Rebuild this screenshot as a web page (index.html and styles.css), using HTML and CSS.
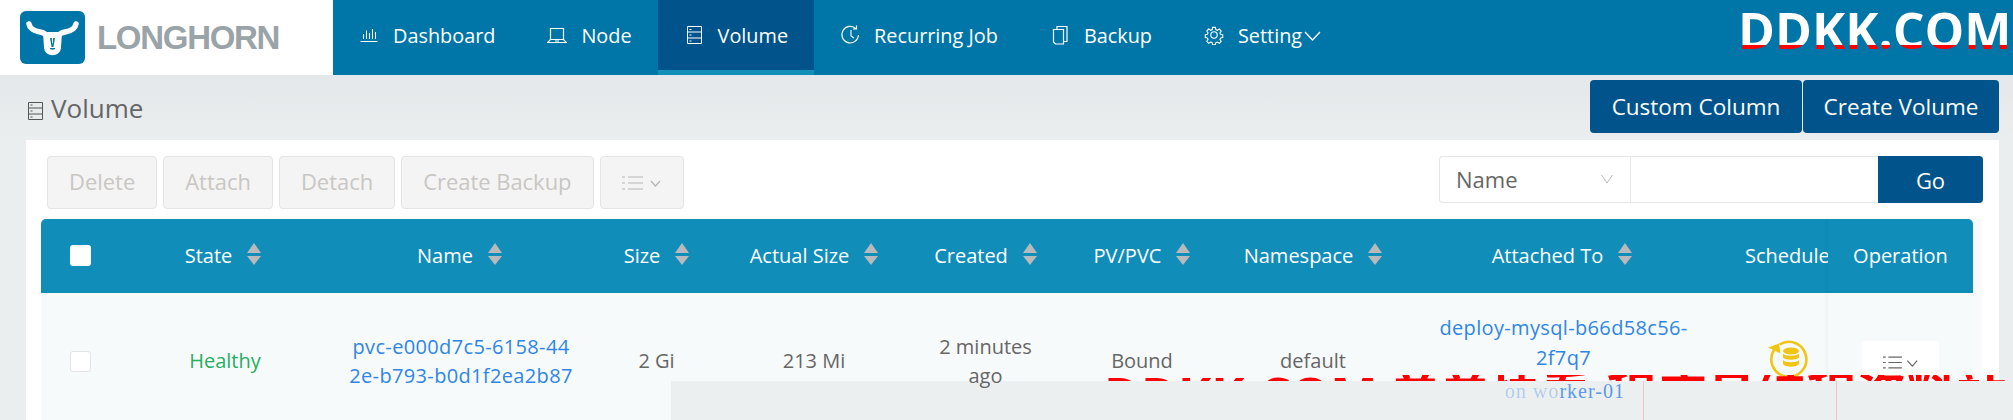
FILE: index.html
```html
<!DOCTYPE html>
<html lang="en">
<head>
<meta charset="utf-8">
<title>Longhorn Volume</title>
<link rel="stylesheet" href="styles.css">
</head>
<body>
<header class="topbar">
  <div class="brand">
    <svg class="logo" viewBox="0 0 65 53">
      <rect width="65" height="53" rx="6" fill="#0075a8"/>
      <path d="M9 13c1 5 5 7 11 8 4 .7 5.500 1.500 6 4l.8 12c.2 3 2.700 4.500 5.700 4.500s5.500-1.500 5.700-4.500l.8-12c.5-2.500 2-3.300 6-4 6-1 10-3 11-8" fill="none" stroke="#fff" stroke-width="5.500" stroke-linecap="round" stroke-linejoin="round"/>
      <path d="M27 21h11l-1.500 16h-8z" fill="#fff"/>
      <path d="M30 27h5l-1.600 9h-1.800z" fill="#0075a8"/>
      <path d="M31.800 27h1.400l-.4 5.500h-.6z" fill="#fff"/>
    </svg>
    <span class="wordmark">LONGHORN</span>
  </div>
  <nav class="nav">
    <a class="nav-item"><svg class="nav-ic" viewBox="0 0 20 20"><path d="M1.500 16.500h17M4.500 14V9M7.500 14V5.500M10.500 14V8M13.500 14V4M16.500 14V7" fill="none" stroke="currentColor"/></svg>Dashboard</a>
    <a class="nav-item"><svg class="nav-ic" viewBox="0 0 20 20"><path d="M3.500 3.500h13v11h-13zM.5 17.500h19l-3-3h-13zM8 16h4" fill="none" stroke="currentColor" stroke-width="1.200"/></svg>Node</a>
    <a class="nav-item active"><svg class="nav-ic" viewBox="0 0 20 20"><path d="M3.500 1.500h14v17h-14zM3.500 7h14M3.500 13h14M5.500 4.500h2M5.500 10h2M5.500 16h2" fill="none" stroke="currentColor"/></svg>Volume</a>
    <a class="nav-item"><svg class="nav-ic" viewBox="0 0 20 20"><path d="M16 3.700A8.300 8.300 0 1 0 18.500 10M11 5v6l3 2M16.500 .5v3.500h-3.500" fill="none" stroke="currentColor" stroke-width="1.100"/></svg>Recurring Job</a>
    <a class="nav-item"><svg class="nav-ic" viewBox="0 0 20 20"><path d="M3.500 4.500h10v14.500h-8l-2-2zM7 4.500V1.500h10v15h-3.500" fill="none" stroke="currentColor" stroke-width="1.200"/></svg>Backup</a>
    <a class="nav-item last"><svg class="nav-ic" viewBox="0 0 20 20"><circle cx="10" cy="10" r="3.200" fill="none" stroke="currentColor" stroke-width="1.100"/><path d="M8.500 1.500h3l.5 2.500 1.700.8 2.200-1.400 2.100 2.200-1.400 2.100.8 1.600 2.300.5v3l-2.300.5-.8 1.600 1.400 2.200-2.100 2.100-2.200-1.400-1.700.8-.5 2.400h-3l-.5-2.400-1.700-.8-2.200 1.400-2.100-2.200 1.400-2.100-.8-1.600-2.300-.5v-3l2.300-.5.800-1.600-1.400-2.200 2.100-2.100 2.200 1.400 1.700-.8z" transform="translate(1 1) scale(.9)" fill="none" stroke="currentColor" stroke-width="1.200"/></svg>Setting<svg class="nav-caret" viewBox="0 0 17 10"><path d="M1 1l7.500 8L16 1" fill="none" stroke="currentColor" stroke-width="1.300"/></svg></a>
  </nav>
  <div class="watermark">DDKK.COM</div>
</header>

<main class="content">
  <div class="page-head">
    <h1 class="page-title"><svg class="title-ic" viewBox="0 0 15 18"><path d="M.5.5h14v17H.5zM.5 6h14M.5 12h14M2.500 3h2M2.500 9h2M2.500 15h2" fill="none" stroke="#555"/></svg>Volume</h1>
    <div class="head-actions">
      <button class="btn-primary">Custom Column</button>
      <button class="btn-primary">Create Volume</button>
    </div>
  </div>

  <section class="panel">
    <div class="toolbar">
      <div class="bulk">
        <button class="btn-off">Delete</button>
        <button class="btn-off">Attach</button>
        <button class="btn-off">Detach</button>
        <button class="btn-off">Create Backup</button>
        <button class="btn-off btn-menu"><svg class="menu-ic muted" viewBox="0 0 40 16"><path d="M0 2h3M6 2h15M0 8h3M6 8h15M0 14h3M6 14h15M29 6l4.500 5L38 6" fill="none" stroke="currentColor" stroke-width="1.200"/></svg></button>
      </div>
      <div class="search">
        <div class="search-field">Name<svg class="field-caret" viewBox="0 0 12 10"><path d="M.5 1l5.500 8 5.500-8" fill="none" stroke="#bbb"/></svg></div>
        <div class="search-input"></div>
        <button class="btn-go">Go</button>
      </div>
    </div>

    <div class="table-wrap">
      <div class="table">
        <div class="row head">
          <div class="c c-check"><span class="box solid"></span></div>
          <div class="c c-state">State<i class="sort"></i></div>
          <div class="c c-name">Name<i class="sort"></i></div>
          <div class="c c-size">Size<i class="sort"></i></div>
          <div class="c c-actual">Actual Size<i class="sort"></i></div>
          <div class="c c-created">Created<i class="sort"></i></div>
          <div class="c c-pv">PV/PVC<i class="sort"></i></div>
          <div class="c c-ns">Namespace<i class="sort"></i></div>
          <div class="c c-att">Attached To<i class="sort"></i></div>
          <div class="c c-sch">Schedule</div>
          <div class="c c-op">Operation</div>
        </div>
        <div class="row body">
          <div class="c c-check"><span class="box"></span></div>
          <div class="c c-state healthy">Healthy</div>
          <div class="c c-name link">pvc-e000d7c5-6158-44<br>2e-b793-b0d1f2ea2b87</div>
          <div class="c c-size">2 Gi</div>
          <div class="c c-actual">213 Mi</div>
          <div class="c c-created"><span class="over-sheet">2 minutes<br>ago</span></div>
          <div class="c c-pv">Bound</div>
          <div class="c c-ns">default</div>
          <div class="c c-att link"><span class="att-lines">deploy-mysql-b66d58c56-<br>2f7q7</span></div>
          <div class="c c-sch">
            <svg class="sched" viewBox="0 0 42 39"><path d="M11.500 6.500A17.500 17.500 0 1 1 6 12" fill="none" stroke="#f0c514" stroke-width="2.600"/><path d="M0 9.500l11-4 1.500 10z" fill="#f0c514"/><ellipse cx="23" cy="13" rx="8" ry="3.500" fill="#f0c514"/><path d="M15 15.500c2 3 14 3 16 0v4c-2 3-14 3-16 0zM15 22c2 3 14 3 16 0v4c-2 3.500-14 3.500-16 0z" fill="#f0c514"/></svg>
          </div>
          <div class="c c-op"><span class="op-btn"><svg class="menu-ic" viewBox="0 0 40 16"><path d="M0 2h3M6 2h15M0 8h3M6 8h15M0 14h3M6 14h15M27 6l5.500 6L38 6" fill="none" stroke="#666" stroke-width="1.300"/></svg></span></div>
        </div>
      </div>
    </div>
  </section>
</main>

<div class="overlay">
  <div class="overlay-red">DDKK.COM 弟弟快看-程序员编程资料站</div>
  <div class="overlay-sheet">
    <span class="ghost-text"><span class="faint">on wo</span>rker-01</span>
    <i class="pink-line first"></i>
    <i class="pink-line second"></i>
  </div>
</div>
</body>
</html>
```

FILE: styles.css
```css
* { box-sizing: border-box; }
html, body { margin: 0; height: 420px; overflow: hidden; }
body {
  position: relative;
  width: 2013px;
  background: #ebeeef;
  font-family: "Open Sans", "Noto Sans", sans-serif;
  font-size: 20px;
  color: #666;
}

.topbar { display: flex; height: 75px; background: #0075a8; position: relative; }
.brand { display: flex; align-items: center; gap: 12px; width: 333px; padding-left: 20px; background: #fff; }
.logo { width: 65px; height: 53px; flex: none; }
.wordmark { font-family: "Liberation Sans", sans-serif; font-weight: 700; font-size: 33px; color: #9aa3a8; letter-spacing: -1.300px; }
.nav { display: flex; }
.nav-item { display: flex; align-items: center; height: 75px; padding: 0 26px 5px; color: #fff; font-size: 19.850px; }
.nav-item.active { background: #00548b; box-shadow: inset 0 -5px 0 #118fb9; }
.nav-item.last { padding-right: 0; }
.nav-ic { width: 20px; height: 20px; margin-right: 14px; flex: none; }
.nav-caret { width: 17px; height: 10px; margin-left: 2px; margin-top: 2px; }
.watermark {
  position: absolute; left: 1738px; top: 0; width: 275px; height: 61px;
  font-size: 50px; font-weight: 700; line-height: 61px; white-space: nowrap;
  background: linear-gradient(#fff 0 45px, #f00 45px);
  -webkit-background-clip: text; background-clip: text;
  -webkit-text-fill-color: transparent;
}

.content { height: 345px; padding: 5px 14px 0 26px; background: linear-gradient(#e4e8ea, #ebeeef 65px); }
.page-head { display: flex; justify-content: space-between; height: 60px; }
.page-title { display: flex; align-items: center; margin: 0 0 0 2px; height: 53px; padding-top: 3px; font-size: 26px; font-weight: 400; color: #666; }
.title-ic { width: 15px; height: 18px; margin-right: 8px; margin-top: 6px; }
.head-actions { display: flex; gap: 1px; }
.btn-primary { height: 53px; padding: 0 21px; background: #00548b; color: #fff; border: 0; border-radius: 4px; font: 22.500px "Open Sans", sans-serif; white-space: nowrap; }
.btn-primary:first-child { width: 212px; padding: 0; }
.btn-primary:last-child { width: 196px; padding: 0; }

.panel { height: 280px; padding-top: 16px; background: #fff; overflow: hidden; }
.toolbar { display: flex; justify-content: space-between; padding: 0 16px 0 21px; }
.bulk { display: flex; gap: 6px; }
.btn-off { height: 53px; padding: 0 21px 2px; background: #f4f4f4; border: 1px solid #e4e4e4; border-radius: 4px; color: #c9c6c3; font: 21.950px "Open Sans", sans-serif; white-space: nowrap; }
.btn-menu { display: flex; align-items: center; justify-content: center; width: 84px; padding: 0; }
.menu-ic { width: 40px; height: 16px; }
.muted { color: #b5b5b5; }
.search { display: flex; height: 47px; font-size: 22px; }
.search-field { display: flex; align-items: center; justify-content: space-between; width: 191px; padding: 0 17px 2px 16px; background: #fff; border: 1px solid #e6e6e6; border-right: 0; border-radius: 4px 0 0 4px; }
.field-caret { width: 12px; height: 10px; }
.search-input { width: 248px; background: #fff; border: 1px solid #e6e6e6; border-right: 0; }
.btn-go { width: 105px; background: #00548b; color: #fff; border: 0; border-radius: 0 4px 4px 0; font: 22px "Open Sans", sans-serif; }

.table-wrap { margin: 10px 17px 0 15px; background: #f9fafb; }
.table { width: 1932px; background: #f6fafb; }
.row { display: flex; }
.row.head { height: 74px; padding-bottom: 2px; background: #118dba; color: #fff; border-radius: 5px 5px 0 0; }
.row.body { height: 138px; padding-bottom: 2px; line-height: 29.500px; }
.c { display: flex; align-items: center; justify-content: center; flex: none; text-align: center; }
.c-check { width: 79px; justify-content: flex-start; padding-left: 29px; }
.c-state { width: 206px; }
.c-name { width: 267px; }
.c-size { width: 127px; }
.c-actual { width: 188px; }
.c-created { width: 155px; }
.c-pv { width: 158px; }
.c-ns { width: 184px; }
.c-att { width: 314px; }
.c-sch { width: 109px; justify-content: flex-start; padding-left: 26px; overflow: hidden; white-space: nowrap; }
.c-op { width: 145px; box-shadow: -2px 0 3px rgba(0,0,0,.03); }
.box { display: block; width: 21px; height: 21px; background: #fff; border: 1px solid #e2e4e6; border-radius: 3px; }
.box.solid { border: 0; }
.sort { display: block; position: relative; width: 14px; height: 22px; margin-left: 15px; margin-top: -2px; }
.sort::before, .sort::after { content: ""; position: absolute; left: 0; border-left: 7px solid transparent; border-right: 7px solid transparent; }
.sort::before { top: 0; border-bottom: 10px solid #b8b9ba; }
.sort::after { bottom: 0; border-top: 9px solid #b8b9ba; }
.healthy { color: #27ae60; padding-left: 4px; }
.link { color: #2f86e6; letter-spacing: .35px; padding-left: 3px; }
.att-lines { margin-top: -37px; }
.over-sheet { position: relative; z-index: 2; }
.sched { width: 42px; height: 39px; margin: -8px 0 0 23px; flex: none; }
.op-btn { display: flex; align-items: center; justify-content: center; width: 77px; height: 42px; margin-top: 2px; background: #fff; border-radius: 4px; }
.op-btn .menu-ic { width: 36px; height: 15px; }

.overlay { position: absolute; left: 671px; top: 375px; width: 1342px; height: 45px; }
.overlay-red { height: 6px; overflow: hidden; padding-left: 433px; color: #f00; font-size: 50px; font-weight: 700; line-height: 41px; white-space: nowrap; font-family: "Open Sans", "Noto Sans CJK SC", sans-serif; }
.overlay-sheet { position: relative; height: 39px; background: #eceff0; }
.ghost-text { position: absolute; left: 834px; top: -1px; color: #5c9ae8; font-family: "Liberation Serif", serif; font-size: 20px; line-height: 23px; letter-spacing: 1px; white-space: nowrap; }
.faint { opacity: .4; }
.pink-line { position: absolute; top: 0; bottom: 0; width: 1px; background: #eec4c4; }
.pink-line.first { left: 972px; }
.pink-line.second { left: 1165px; }
```
